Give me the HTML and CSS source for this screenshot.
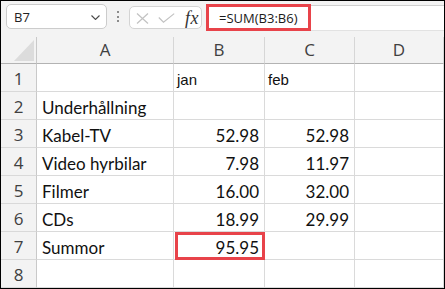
FILE: index.html
```html
<!DOCTYPE html>
<html>
<head>
<meta charset="utf-8">
<link rel="stylesheet" href="styles.css">
</head>
<body>
<div class="frame">
  <div class="toolbar">
    <div class="namebox">
      <span class="nb-text">B7</span>
      <svg class="chev" width="9" height="5" viewBox="0 0 9 5"><path d="M0.5 0.5 L4.5 4.5 L8.5 0.5" fill="none" stroke="#4a4a4a" stroke-width="1.1"/></svg>
    </div>
    <div class="dots"><i></i><i></i><i></i></div>
    <div class="fxbox">
      <svg class="ico" width="13" height="11" viewBox="0 0 13 11"><path d="M1 0.5 L12 10.5 M12 0.5 L1 10.5" stroke="#c2c2c2" stroke-width="1.2" fill="none"/></svg>
      <svg class="ico" width="17" height="10" viewBox="0 0 17 10"><path d="M0.8 4.5 L5.5 9.2 L16.2 0.6" stroke="#c2c2c2" stroke-width="1.2" fill="none"/></svg>
      <span class="fx">fx</span>
    </div>
    <div class="formulabar">
      <div class="formula">=SUM(B3:B6)</div>
    </div>
  </div>
  <div class="sheet">
    <div class="corner"><svg width="20" height="21" viewBox="0 0 20 21"><polygon points="0,21 20,0 20,21" fill="#dcdcdc"/></svg></div>
    <div class="ch">A</div><div class="ch">B</div><div class="ch">C</div><div class="ch">D</div>

    <div class="rh">1</div><div class="c"></div><div class="c small">jan</div><div class="c small">feb</div><div class="c"></div>
    <div class="rh">2</div><div class="c">Underhållning</div><div class="c"></div><div class="c"></div><div class="c"></div>
    <div class="rh">3</div><div class="c">Kabel-TV</div><div class="c num">52.98</div><div class="c num">52.98</div><div class="c"></div>
    <div class="rh">4</div><div class="c">Video hyrbilar</div><div class="c num">7.98</div><div class="c num">11.97</div><div class="c"></div>
    <div class="rh">5</div><div class="c">Filmer</div><div class="c num">16.00</div><div class="c num">32.00</div><div class="c"></div>
    <div class="rh">6</div><div class="c">CDs</div><div class="c num">18.99</div><div class="c num">29.99</div><div class="c"></div>
    <div class="rh">7</div><div class="c">Summor</div><div class="c num hl">95.95</div><div class="c"></div><div class="c"></div>
    <div class="rh">8</div><div class="c"></div><div class="c"></div><div class="c"></div><div class="c"></div>
  </div>
</div>
</body>
</html>
```
FILE: styles.css
```css
* { box-sizing: border-box; }
html, body { margin: 0; padding: 0; background: #fff; }

.frame {
  width: 445px;
  height: 289px;
  border: 1px solid #000;
  background: #f3f3f3;
  overflow: hidden;
  display: flex;
  flex-direction: column;
}

.toolbar {
  height: 36px;
  flex: none;
  display: flex;
  align-items: flex-start;
  padding: 3px 0 0 5px;
  font-family: "Open Sans", sans-serif;
}

.namebox {
  width: 101px;
  height: 25px;
  background: #fff;
  border: 1px solid #cccccc;
  border-radius: 5px;
  display: flex;
  align-items: center;
  justify-content: space-between;
  padding: 0 6px 0 7px;
}
.nb-text { font-size: 13px; color: #222; line-height: 16px; padding-top: 1px; }
.chev { margin-top: 1px; }

.dots {
  width: 22px;
  height: 25px;
  display: flex;
  flex-direction: column;
  align-items: center;
  justify-content: center;
  gap: 2.5px;
}
.dots i { display: block; width: 2px; height: 2px; background: #8c8c8c; }

.fxbox {
  margin-top: 2px;
  width: 73px;
  height: 23px;
  background: #fff;
  border: 1px solid #d4d4d4;
  border-radius: 5px;
  display: flex;
  align-items: center;
  padding: 0 0 0 6px;
}
.fxbox .ico:first-child { margin-right: 9px; margin-top: 1px; }
.fxbox .ico:nth-child(2) { margin-right: 10px; margin-top: 1px; }
.fx {
  font-family: "Liberation Serif", serif;
  font-style: italic;
  font-size: 18px;
  color: #333;
  line-height: 20px;
  letter-spacing: 0.5px;
}

.formulabar {
  flex: 1;
  margin-left: 4px;
  margin-top: 1px;
  height: 26px;
  background: #fff;
  border-top: 1px solid #cfcfcf;
  border-bottom: 1px solid #e2e2e2;
  display: flex;
}
.formula {
  margin: -2px 0 -1px 0;
  width: 105px;
  border: 3px solid #e8434a;
  font-size: 13px;
  color: #1a1a1a;
  padding: 0 0 0 10px;
  display: flex;
  align-items: center;
  line-height: 16px;
}

.sheet {
  flex: 1;
  display: grid;
  grid-template-columns: 36px 137px 91px 90px 1fr;
  grid-template-rows: 27px repeat(8, 28px);
  background: #fff;
}

.corner {
  background: #f3f3f3;
  border-right: 1px solid #c9c9c9;
  border-bottom: 1px solid #b3b3b3;
  display: flex;
  justify-content: flex-end;
  align-items: flex-end;
  padding: 0 2px 2px 0;
}

.ch {
  background: #f3f3f3;
  border-right: 1px solid #d6d6d6;
  border-bottom: 1px solid #b3b3b3;
  font-family: "Open Sans", sans-serif;
  font-size: 17px;
  color: #404040;
  line-height: 20px;
  display: flex;
  justify-content: center;
  align-items: flex-end;
  padding-bottom: 3px;
}
.ch:last-of-type { border-right: none; }

.rh {
  background: #f3f3f3;
  border-right: 1px solid #c9c9c9;
  border-bottom: 1px solid #d9d9d9;
  font-family: "Open Sans", sans-serif;
  font-size: 17px;
  color: #404040;
  line-height: 20px;
  display: flex;
  justify-content: center;
  align-items: flex-end;
  padding-bottom: 2px;
}

.c {
  border-right: 1px solid #dadada;
  border-bottom: 1px solid #dadada;
  font-family: "Lato", sans-serif;
  font-size: 17px;
  color: #111;
  line-height: 20px;
  display: flex;
  align-items: flex-end;
  padding: 0 4px 1px 5px;
  white-space: nowrap;
}
.c.small {
  font-family: "Liberation Sans", Arial, sans-serif;
  font-size: 15px;
  line-height: 17px;
  padding-left: 3px;
  padding-bottom: 3px;
}
.c.num { justify-content: flex-end; padding-right: 5px; }

.hl { position: relative; }
.hl::after {
  content: "";
  position: absolute;
  top: 0;
  left: 1px;
  right: -1px;
  bottom: -1px;
  border: 3px solid #e8434a;
}
```
